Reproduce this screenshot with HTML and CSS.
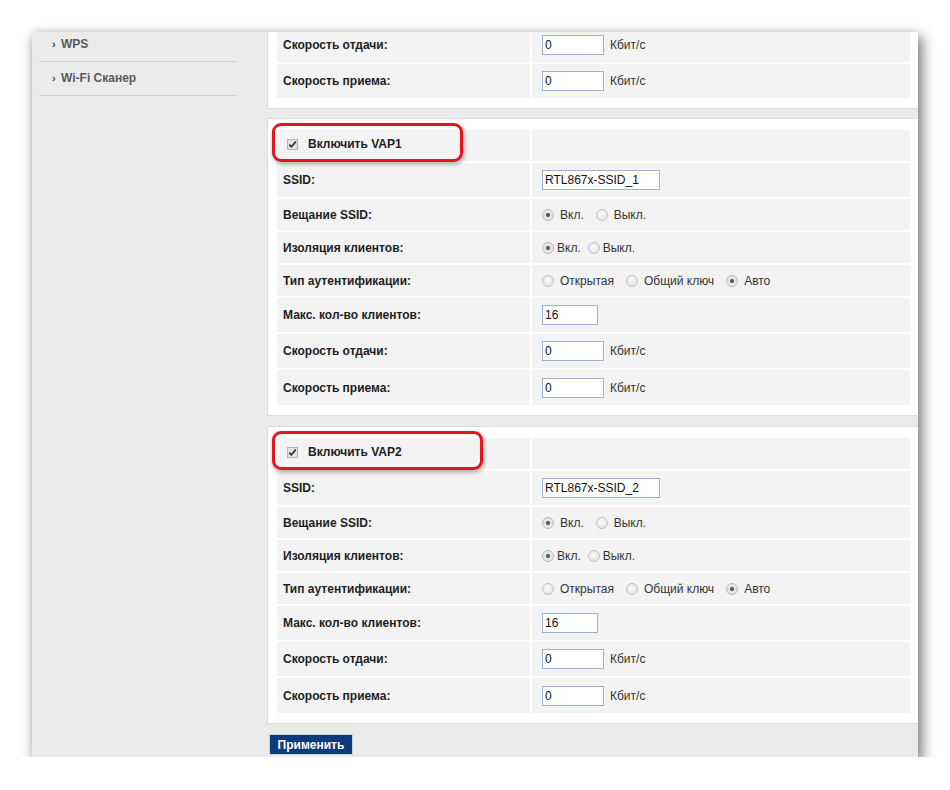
FILE: index.html
```html
<!DOCTYPE html>
<html lang="ru">
<head>
<meta charset="utf-8">
<title>WLAN VAP</title>
<link rel="stylesheet" href="styles.css">
</head>
<body>
<div class="window">
  <aside class="sidebar">
    <ul class="menu">
      <li class="menu-item"><span class="bullet">›</span>WPS</li>
      <li class="menu-item"><span class="bullet">›</span>Wi-Fi Сканер</li>
    </ul>
  </aside>
  <main class="main">
    <section class="panel panel-top">
      <div class="grid">
        <div class="cell label h34">Скорость отдачи:</div>
        <div class="cell value h34"><input class="field w62" type="text" value="0"><span class="unit">Кбит/с</span></div>
        <div class="cell label h34">Скорость приема:</div>
        <div class="cell value h34"><input class="field w62" type="text" value="0"><span class="unit">Кбит/с</span></div>
      </div>
    </section>

    <section class="panel">
      <div class="grid">
        <div class="cell label h31 enable">
          <span class="highlight hl1"></span>
          <span class="checkbox"><svg width="9" height="9" viewBox="0 0 9 9"><path d="M1.2 4.6 L3.4 6.8 L7.8 1.6" fill="none" stroke="#333" stroke-width="1.7"/></svg></span>
          Включить VAP1
        </div>
        <div class="cell value h31"></div>

        <div class="cell label h34">SSID:</div>
        <div class="cell value h34"><input class="field w118" type="text" value="RTL867x-SSID_1"></div>

        <div class="cell label h31">Вещание SSID:</div>
        <div class="cell value h31"><span class="radio on"></span><span class="opt">Вкл.</span><span class="radio"></span><span class="opt">Выкл.</span></div>

        <div class="cell label h31">Изоляция клиентов:</div>
        <div class="cell value h31 tight"><span class="radio on"></span><span class="opt">Вкл.</span><span class="radio"></span><span class="opt">Выкл.</span></div>

        <div class="cell label h31">Тип аутентификации:</div>
        <div class="cell value h31"><span class="radio"></span><span class="opt">Открытая</span><span class="radio"></span><span class="opt">Общий ключ</span><span class="radio on"></span><span class="opt">Авто</span></div>

        <div class="cell label h34">Макс. кол-во клиентов:</div>
        <div class="cell value h34"><input class="field w56" type="text" value="16"></div>

        <div class="cell label h34">Скорость отдачи:</div>
        <div class="cell value h34"><input class="field w62" type="text" value="0"><span class="unit">Кбит/с</span></div>

        <div class="cell label h35">Скорость приема:</div>
        <div class="cell value h35"><input class="field w62" type="text" value="0"><span class="unit">Кбит/с</span></div>
      </div>
    </section>

    <section class="panel">
      <div class="grid">
        <div class="cell label h31 enable">
          <span class="highlight hl2"></span>
          <span class="checkbox"><svg width="9" height="9" viewBox="0 0 9 9"><path d="M1.2 4.6 L3.4 6.8 L7.8 1.6" fill="none" stroke="#333" stroke-width="1.7"/></svg></span>
          Включить VAP2
        </div>
        <div class="cell value h31"></div>

        <div class="cell label h34">SSID:</div>
        <div class="cell value h34"><input class="field w118" type="text" value="RTL867x-SSID_2"></div>

        <div class="cell label h31">Вещание SSID:</div>
        <div class="cell value h31"><span class="radio on"></span><span class="opt">Вкл.</span><span class="radio"></span><span class="opt">Выкл.</span></div>

        <div class="cell label h31">Изоляция клиентов:</div>
        <div class="cell value h31 tight"><span class="radio on"></span><span class="opt">Вкл.</span><span class="radio"></span><span class="opt">Выкл.</span></div>

        <div class="cell label h31">Тип аутентификации:</div>
        <div class="cell value h31"><span class="radio"></span><span class="opt">Открытая</span><span class="radio"></span><span class="opt">Общий ключ</span><span class="radio on"></span><span class="opt">Авто</span></div>

        <div class="cell label h34">Макс. кол-во клиентов:</div>
        <div class="cell value h34"><input class="field w56" type="text" value="16"></div>

        <div class="cell label h34">Скорость отдачи:</div>
        <div class="cell value h34"><input class="field w62" type="text" value="0"><span class="unit">Кбит/с</span></div>

        <div class="cell label h35">Скорость приема:</div>
        <div class="cell value h35"><input class="field w62" type="text" value="0"><span class="unit">Кбит/с</span></div>
      </div>
    </section>

    <div class="actions"><button class="apply" type="button">Применить</button></div>
  </main>
</div>
</body>
</html>
```
FILE: styles.css
```css
* { box-sizing: border-box; }

html, body {
  margin: 0;
  padding: 0;
  background: #ffffff;
}

body {
  font-family: "Liberation Sans", Arial, sans-serif;
  font-size: 12px;
  color: #222;
}

.window {
  margin: 32px 0 0 32px;
  width: 886px;
  height: 725px;
  background: #ebebeb;
  overflow: hidden;
  display: flex;
  box-shadow: 4px 6px 12px 1px rgba(0, 0, 0, 0.45), 0 0 10px rgba(0, 0, 0, 0.12);
}

/* sidebar */
.sidebar {
  width: 235px;
  flex: 0 0 235px;
}

.menu {
  list-style: none;
  margin: -4px 0 0 7px;
  padding: 0;
  width: 198px;
}

.menu-item {
  height: 34px;
  border-bottom: 1px solid #d2d2d2;
  display: flex;
  align-items: center;
  padding: 0 0 1px 13px;
  font-weight: bold;
  color: #5a5a5a;
  font-size: 12px;
}

.bullet {
  display: inline-block;
  width: 9px;
  font-size: 11px;
  color: #444;
  font-weight: bold;
}

/* main */
.main {
  flex: 1;
  display: flex;
  flex-direction: column;
}

.panel {
  background: #ffffff;
  border: 1px solid #dcdcdc;
  border-right: none;
  padding: 11px 8px 10px 9px;
  margin-bottom: 10px;
}

.panel-top {
  margin-top: -16px;
  margin-bottom: 9px;
}

.grid {
  display: grid;
  grid-template-columns: 253px 1fr;
  gap: 2px;
}

.cell {
  background: #f3f3f3;
  display: flex;
  align-items: center;
}

.h31 { height: 31px; }
.h34 { height: 34px; }
.h35 { height: 35px; }

.label {
  padding-left: 6px;
  font-weight: bold;
  color: #1e1e1e;
}

.value {
  padding-left: 10px;
  color: #333;
}

.field {
  height: 20px;
  border: 1px solid #9fb1cb;
  background: #fff;
  font-family: "Liberation Sans", Arial, sans-serif;
  font-size: 12px;
  color: #111;
  padding: 0 2px;
  margin: 0;
  outline: none;
}

.w62 { width: 62px; }
.w56 { width: 56px; }
.w118 { width: 118px; }

.unit {
  margin-left: 6px;
  color: #333;
}

/* radios */
.radio {
  display: inline-block;
  width: 12px;
  height: 12px;
  border-radius: 50%;
  border: 1px solid #c3c3c3;
  background: radial-gradient(circle at 45% 40%, #fbfbfb 0, #e6e6e6 70%, #dadada 100%);
  margin-right: 6px;
  flex: 0 0 12px;
}

.radio.on {
  background: radial-gradient(circle at 50% 50%, #5f5f5f 0, #5f5f5f 1.6px, #e2e2e2 2.4px, #f4f4f4 100%);
  border-color: #b8b8b8;
}

.opt {
  margin-right: 12px;
  color: #333;
}

.tight .radio { margin-right: 3px; }
.tight .opt { margin-right: 7px; }

/* enable row */
.enable {
  position: relative;
  padding-left: 10px;
  padding-bottom: 3px;
}

.checkbox {
  display: inline-flex;
  align-items: center;
  justify-content: center;
  width: 11px;
  height: 11px;
  border: 1px solid #b5b5b5;
  background: #e4e4e4;
  margin-right: 10px;
}

.highlight {
  position: absolute;
  left: -5px;
  top: -7px;
  height: 39px;
  border: 3px solid #e3151d;
  border-radius: 9px;
  box-shadow: 1px 2px 4px rgba(0, 0, 0, 0.35);
  pointer-events: none;
}

.hl1 { width: 191px; }
.hl2 { width: 211px; }

/* actions */
.actions {
  padding: 0 0 0 2px;
}

.apply {
  width: 84px;
  height: 21px;
  background: #0c3a7a;
  color: #ffffff;
  border: 1px solid #c9d1dc;
  font-family: "Liberation Sans", Arial, sans-serif;
  font-size: 12px;
  font-weight: bold;
  padding: 0;
  margin: 0;
}
```
